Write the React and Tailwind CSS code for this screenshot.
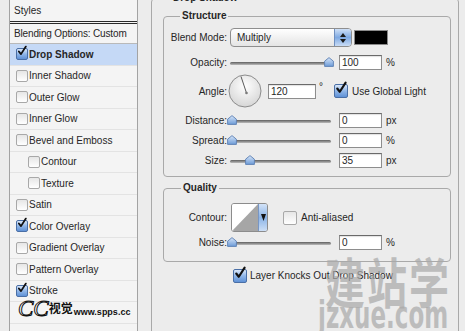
import React from 'react';

const layers = [
  { label: 'Drop Shadow', checked: true, selected: true },
  { label: 'Inner Shadow' },
  { label: 'Outer Glow' },
  { label: 'Inner Glow' },
  { label: 'Bevel and Emboss' },
  { label: 'Contour', indent: true },
  { label: 'Texture', indent: true },
  { label: 'Satin' },
  { label: 'Color Overlay', checked: true },
  { label: 'Gradient Overlay' },
  { label: 'Pattern Overlay' },
  { label: 'Stroke', checked: true },
];

const CheckBox = ({ checked, big }) => {
  const size = big ? 'w-[14px] h-[14px]' : 'w-[12px] h-[12px]';
  if (checked) {
    return (
      <span className={`relative block shrink-0 ${size} rounded-[2px] border border-[#4a6fa6] bg-linear-to-b from-[#dbe8fa] via-[#90b6e8] to-[#5f91d6]`}>
        <svg viewBox="0 0 14 14" className="absolute left-[0px] top-[-3px] w-full h-full overflow-visible">
          <path d="M2.6 7.6 L5.6 11.4 L12.4 0.8" fill="none" stroke="#111" strokeWidth="2.5" strokeLinecap="round" strokeLinejoin="round" />
        </svg>
      </span>
    );
  }
  return (
    <span className={`block shrink-0 ${size} rounded-[2px] border border-[#a8a8a8] bg-linear-to-b from-[#e6e6e6] to-white`} />
  );
};

const Field = ({ value, wide }) => (
  <div className={`${wide ? 'w-[48px]' : 'w-[43px]'} h-[15px] shrink-0 border border-[#8d8d8d] border-t-[#6a6a6a] bg-white pl-[2px] leading-[13px] shadow-[inset_0_1px_1px_rgba(0,0,0,0.12)]`}>
    {value}
  </div>
);

const Slider = ({ pos }) => (
  <div className="relative w-[106px] h-[15px] shrink-0">
    <div className="absolute left-[3px] right-[2px] top-[7px] h-[3px] rounded-full bg-linear-to-b from-[#5f5f5f] to-[#bdbdbd]" />
    <svg className="absolute top-[2px]" style={{ left: pos - 5 }} width="10" height="10" viewBox="0 0 10 10">
      <defs>
        <linearGradient id="thumb" x1="0" y1="0" x2="0" y2="1">
          <stop offset="0" stopColor="#d8e6f8" />
          <stop offset="1" stopColor="#6d9bd8" />
        </linearGradient>
      </defs>
      <path d="M5 0.6 L9.4 4.2 V9.4 H0.6 V4.2 Z" fill="url(#thumb)" stroke="#5b7fb2" strokeWidth="0.9" />
    </svg>
  </div>
);

const Label = ({ children }) => (
  <span className="w-[63px] shrink-0 text-right">{children}</span>
);

const SliderRow = ({ label, pos, value, unit, className }) => (
  <div className={`flex items-center h-[15px] ${className}`}>
    <Label>{label}</Label>
    <Slider pos={pos} />
    <span className="ml-[6px]"><Field value={value} /></span>
    <span className="ml-[4px]">{unit}</span>
  </div>
);

export default function App() {
  return (
    <div className="relative flex w-[465px] h-[331px] overflow-hidden bg-[#ececec] text-[10px] text-[#262626] font-['Liberation_Sans',Arial,sans-serif]">
      {/* styles list */}
      <aside className="ml-[9px] w-[129px] h-full shrink-0 border-x border-[#a3a3a3] bg-[#f4f4f4]">
        <div className="h-[21px] pl-[4px] flex items-center">Styles</div>
        <div className="h-[3px] border-y border-[#2a2a2a]" />
        <div className="h-[20px] pl-[4px] flex items-center border-b border-[#b9b9b9] tracking-[-0.15px]">Blending Options: Custom</div>
        {layers.map((l) => (
          <div
            key={l.label}
            className={`h-[21.5px] flex items-center gap-[1px] border-b border-[#e3e3e3] ${l.indent ? 'pl-[18px]' : 'pl-[6px]'} ${l.selected ? 'bg-[#c5d9f6] font-bold' : ''}`}
          >
            <CheckBox checked={l.checked} />
            <span>{l.label}</span>
          </div>
        ))}
        <div className="h-[21.5px] border-b border-[#e3e3e3]" />
      </aside>

      {/* drop shadow panel */}
      <main className="ml-[13px] shrink-0">
        <fieldset className="mt-[-8px] w-[308px] h-[360px] border border-[#a9a9a9] rounded-[4px] pl-[11px] pr-[7px]">
          <legend className="ml-[8px] px-[2px] leading-[12px] font-bold">Drop Shadow</legend>

          <fieldset className="mt-[6px] h-[167px] border border-[#a9a9a9] rounded-[4px]">
            <legend className="ml-[16px] px-[2px] leading-[12px] font-bold">Structure</legend>

            <div className="flex items-center h-[19px] mt-[6px]">
              <Label>Blend Mode:</Label>
              <div className="ml-[3px] flex w-[122px] h-[19px] rounded-[4px] border border-[#8e8e8e] overflow-hidden bg-linear-to-b from-white to-[#e4e4e4]">
                <span className="flex-1 pl-[6px] leading-[17px]">Multiply</span>
                <span className="w-[17px] flex flex-col items-center justify-center gap-[2px] border-l border-[#6f8fbf] bg-linear-to-b from-[#cfe0f7] via-[#7ea9e2] to-[#c9dcf5]">
                  <svg width="6" height="4" viewBox="0 0 6 4"><path d="M3 0 L6 4 H0 Z" fill="#1b1b1b" /></svg>
                  <svg width="6" height="4" viewBox="0 0 6 4"><path d="M0 0 H6 L3 4 Z" fill="#1b1b1b" /></svg>
                </span>
              </div>
              <div className="ml-[2px] w-[34px] h-[15px] border border-[#8a8a8a] bg-black" />
            </div>

            <SliderRow label="Opacity:" pos={102} value="100" unit="%" className="mt-[8px]" />

            <div className="flex items-center h-[34px] mt-[4px]">
              <Label>Angle:</Label>
              <svg className="ml-[1px] shrink-0" width="34" height="34" viewBox="0 0 34 34">
                <defs>
                  <radialGradient id="dial" cx="50%" cy="35%" r="65%">
                    <stop offset="0" stopColor="#ffffff" />
                    <stop offset="1" stopColor="#d6d6d6" />
                  </radialGradient>
                </defs>
                <circle cx="17" cy="17" r="16" fill="url(#dial)" stroke="#8c8c8c" />
                <line x1="18.5" y1="19" x2="13" y2="2.5" stroke="#5a5a5a" strokeWidth="1" />
                <circle cx="18.5" cy="19" r="1.3" fill="#7a7a7a" />
              </svg>
              <span className="ml-[6px]"><Field value="120" wide /></span>
              <span className="ml-[3px] self-start mt-[9px] leading-[8px]">°</span>
              <span className="ml-[11px]"><CheckBox checked big /></span>
              <span className="ml-[4px]">Use Global Light</span>
            </div>

            <SliderRow label="Distance:" pos={5} value="0" unit="px" className="mt-[5px]" />
            <SliderRow label="Spread:" pos={5} value="0" unit="%" className="mt-[5px]" />
            <SliderRow label="Size:" pos={23} value="35" unit="px" className="mt-[5px]" />
          </fieldset>

          <fieldset className="mt-[5px] h-[80px] border border-[#a9a9a9] rounded-[4px]">
            <legend className="ml-[17px] px-[2px] leading-[12px] font-bold">Quality</legend>

            <div className="flex items-center h-[29px] mt-[9px]">
              <Label>Contour:</Label>
              <div className="ml-[4px] flex w-[37px] h-[29px] shrink-0 rounded-[3px] border border-[#8c8c8c] overflow-hidden">
                <svg width="26" height="27" viewBox="0 0 26 27">
                  <rect width="26" height="27" fill="#fff" />
                  <path d="M0 27 L26 0 V27 Z" fill="#a6a6a6" />
                </svg>
                <span className="flex-1 flex items-center justify-center border-l border-[#7896c4] bg-linear-to-b from-[#d3e3f8] via-[#8ab3e6] to-[#cddff6]">
                  <svg width="5" height="7" viewBox="0 0 5 7"><path d="M0 0 H5 L2.5 7 Z" fill="#111" /></svg>
                </span>
              </div>
              <span className="ml-[15px]"><CheckBox big /></span>
              <span className="ml-[4px]">Anti-aliased</span>
            </div>

            <SliderRow label="Noise:" pos={5} value="0" unit="%" className="mt-[3px]" />
          </fieldset>

          <div className="flex items-center h-[15px] mt-[6px] ml-[70px]">
            <CheckBox checked big />
            <span className="ml-[3px]">Layer Knocks Out Drop Shadow</span>
          </div>
        </fieldset>
      </main>

      {/* watermarks */}
      <div className="absolute left-[18px] top-[297px] flex items-end pointer-events-none">
        <span className="text-[23px] italic leading-[24px] text-white [-webkit-text-stroke:1px_#111] font-['Liberation_Serif',serif]">CC</span>
        <span className="text-[12px] leading-[14px] font-bold text-[#111] font-['Noto_Sans_CJK_SC',sans-serif] mb-[6px]">视觉</span>
        <span className="ml-[1px] text-[9px] leading-[10px] font-bold text-[#111] mb-[4px] font-['Liberation_Sans',Arial,sans-serif]">www.spps.cc</span>
      </div>
      <span className="absolute left-[325px] top-[254px] origin-top scale-y-[1.35] text-[40px] leading-[40px] font-bold tracking-[2px] text-[#a9a9a9] opacity-70 pointer-events-none font-['Noto_Sans_CJK_SC',sans-serif]">建站学</span>
      <span className="absolute left-[318px] top-[296px] origin-top scale-y-[1.6] text-[23px] leading-[24px] font-bold text-[#a9a9a9] opacity-70 pointer-events-none font-['DejaVu_Sans',sans-serif]">jzxue.com</span>
    </div>
  );
}
